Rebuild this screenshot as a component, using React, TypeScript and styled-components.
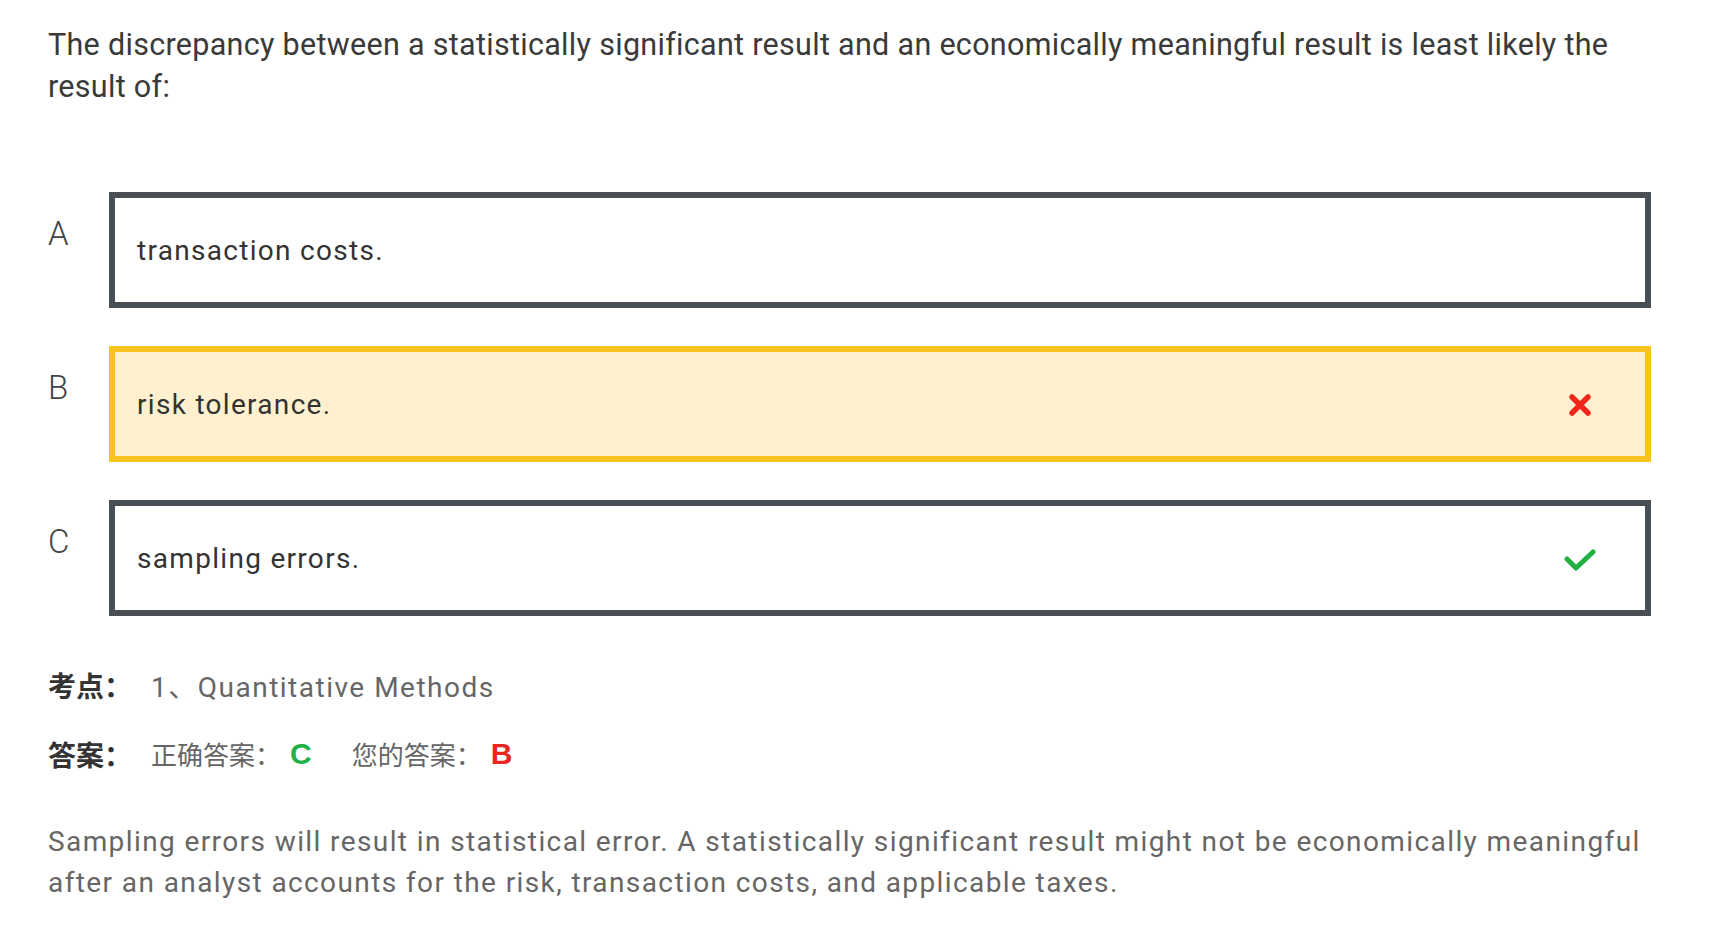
import React from "react";
import styled, { createGlobalStyle } from "styled-components";

const Global = createGlobalStyle`
  html, body { margin: 0; padding: 0; background: #ffffff; }
  body { font-family: Roboto, "Noto Sans CJK SC", sans-serif; color: #333; }
`;

const Page = styled.div`
  padding: 24px 69px 0 48px;
`;

const Question = styled.p`
  margin: 0;
  font-size: 30.5px;
  line-height: 42px;
  letter-spacing: 0.3px;
  color: #3a3a3a;
  font-weight: 400;
`;

const Options = styled.div`
  margin-top: 84px;
  display: flex;
  flex-direction: column;
  gap: 38px;
`;

const Row = styled.div`
  display: flex;
  align-items: flex-start;
`;

const Letter = styled.div`
  width: 61px;
  flex: none;
  padding-top: 20px;
  font-size: 33px;
  line-height: 43px;
  color: #444;
  font-weight: 300;
`;

const Box = styled.div<{ $picked?: boolean }>`
  flex: 1;
  height: 116px;
  box-sizing: border-box;
  border: 6px solid ${(p) => (p.$picked ? "#f9c21c" : "#4a4e55")};
  background: ${(p) => (p.$picked ? "#fff1cf" : "#ffffff")};
  display: flex;
  align-items: center;
  justify-content: space-between;
  padding: 0 49px 0 22px;
  font-size: 28px;
  letter-spacing: 1.3px;
  color: #333;
`;

const Mark = styled.span`
  display: flex;
  width: 32px;
  justify-content: center;
  padding-top: 3px;
`;

const Meta = styled.div`
  margin-top: 47px;
  display: flex;
  flex-direction: column;
  gap: 26px;
`;

const MetaLine = styled.div`
  display: flex;
  align-items: center;
  height: 43px;
`;

const Label = styled.span`
  font-family: "Noto Sans CJK SC", sans-serif;
  font-weight: 700;
  font-size: 28px;
  color: #333;
  width: 103px;
  flex: none;
`;

const Value = styled.span`
  font-size: 28px;
  letter-spacing: 1.5px;
  color: #666;
  font-family: Roboto, "Noto Sans CJK SC", sans-serif;
`;

const Sub = styled.span`
  font-family: "Noto Sans CJK SC", sans-serif;
  font-size: 26px;
  color: #666;
`;

const Answer = styled.span<{ $ok?: boolean }>`
  font-family: "Liberation Sans", sans-serif;
  font-weight: 700;
  font-size: 30px;
  color: ${(p) => (p.$ok ? "#21b14a" : "#e8281e")};
  margin: 0 40px 0 9px;
`;

const Explanation = styled.p`
  margin: 46px 0 0;
  font-size: 28px;
  line-height: 41px;
  letter-spacing: 1.4px;
  color: #666;
`;

const Cross = () => (
  <svg width="26" height="24" viewBox="0 0 26 24">
    <path d="M5 3 L21 19 M21 3 L5 19" stroke="#f0261a" strokeWidth="5.5" strokeLinecap="round" />
  </svg>
);

const Check = () => (
  <svg width="32" height="24" viewBox="0 0 32 24">
    <path d="M3 11 L12 20 L29 4" stroke="#20b043" strokeWidth="5" fill="none" strokeLinecap="round" strokeLinejoin="round" />
  </svg>
);

export default function App() {
  return (
    <>
      <Global />
      <Page>
        <Question>
          The discrepancy between a statistically significant result and an economically meaningful result is least likely the result of:
        </Question>
        <Options>
          <Row>
            <Letter>A</Letter>
            <Box>transaction costs.</Box>
          </Row>
          <Row>
            <Letter>B</Letter>
            <Box $picked>
              risk tolerance.
              <Mark><Cross /></Mark>
            </Box>
          </Row>
          <Row>
            <Letter>C</Letter>
            <Box>
              sampling errors.
              <Mark><Check /></Mark>
            </Box>
          </Row>
        </Options>
        <Meta>
          <MetaLine>
            <Label>考点：</Label>
            <Value>1、Quantitative Methods</Value>
          </MetaLine>
          <MetaLine>
            <Label>答案：</Label>
            <Sub>正确答案：</Sub>
            <Answer $ok>C</Answer>
            <Sub>您的答案：</Sub>
            <Answer>B</Answer>
          </MetaLine>
        </Meta>
        <Explanation>
          Sampling errors will result in statistical error. A statistically significant result might not be economically meaningful after an analyst accounts for the risk, transaction costs, and applicable taxes.
        </Explanation>
      </Page>
    </>
  );
}
